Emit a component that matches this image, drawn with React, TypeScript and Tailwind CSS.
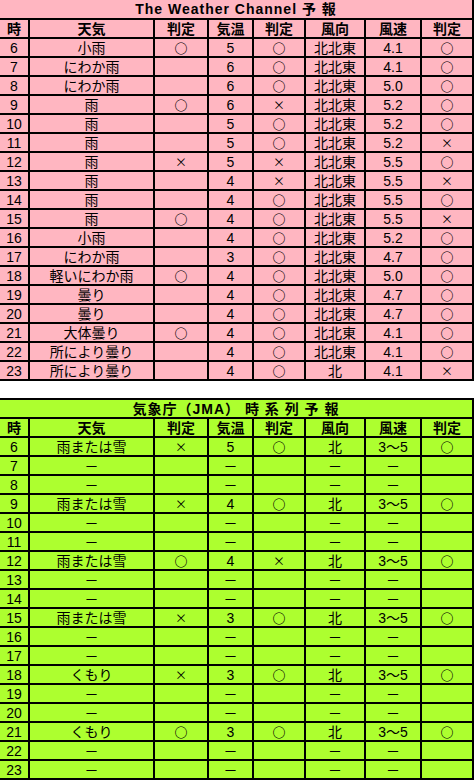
import React from "react"

type Row = string[]

// hour, weather, judge, temp, judge, wind dir, wind speed, judge
const TWC_ROWS: Row[] = [
  ["6", "小雨", "○", "5", "○", "北北東", "4.1", "○"],
  ["7", "にわか雨", "", "6", "○", "北北東", "4.1", "○"],
  ["8", "にわか雨", "", "6", "○", "北北東", "5.0", "○"],
  ["9", "雨", "○", "6", "×", "北北東", "5.2", "○"],
  ["10", "雨", "", "5", "○", "北北東", "5.2", "○"],
  ["11", "雨", "", "5", "○", "北北東", "5.2", "×"],
  ["12", "雨", "×", "5", "×", "北北東", "5.5", "○"],
  ["13", "雨", "", "4", "×", "北北東", "5.5", "×"],
  ["14", "雨", "", "4", "○", "北北東", "5.5", "○"],
  ["15", "雨", "○", "4", "○", "北北東", "5.5", "×"],
  ["16", "小雨", "", "4", "○", "北北東", "5.2", "○"],
  ["17", "にわか雨", "", "3", "○", "北北東", "4.7", "○"],
  ["18", "軽いにわか雨", "○", "4", "○", "北北東", "5.0", "○"],
  ["19", "曇り", "", "4", "○", "北北東", "4.7", "○"],
  ["20", "曇り", "", "4", "○", "北北東", "4.7", "○"],
  ["21", "大体曇り", "○", "4", "○", "北北東", "4.1", "○"],
  ["22", "所により曇り", "", "4", "○", "北北東", "4.1", "○"],
  ["23", "所により曇り", "", "4", "○", "北", "4.1", "×"],
]

const dash = (h: string): Row => [h, "－", "", "－", "", "－", "－", ""]

const JMA_ROWS: Row[] = [
  ["6", "雨または雪", "×", "5", "○", "北", "3～5", "○"],
  dash("7"),
  dash("8"),
  ["9", "雨または雪", "×", "4", "○", "北", "3～5", "○"],
  dash("10"),
  dash("11"),
  ["12", "雨または雪", "○", "4", "×", "北", "3～5", "○"],
  dash("13"),
  dash("14"),
  ["15", "雨または雪", "×", "3", "○", "北", "3～5", "○"],
  dash("16"),
  dash("17"),
  ["18", "くもり", "×", "3", "○", "北", "3～5", "○"],
  dash("19"),
  dash("20"),
  ["21", "くもり", "○", "3", "○", "北", "3～5", "○"],
  dash("22"),
  dash("23"),
]

const HEADERS = ["時", "天気", "判定", "気温", "判定", "風向", "風速", "判定"]

function Cell({ value }: { value: string }) {
  // judgement marks come from the CJK font so they render full size
  if (value === "○") {
    return <span className="font-['Noto_Sans_CJK_JP',sans-serif] font-bold text-[13px]">○</span>
  }
  if (value === "×") {
    return <span className="font-['Noto_Sans_CJK_JP',sans-serif] text-[12px]">×</span>
  }
  return <>{value}</>
}

function ForecastTable({
  title,
  rows,
  cellBg,
  outer,
}: {
  title: string
  rows: Row[]
  cellBg: string
  outer: string
}) {
  return (
    <div
      className={`grid grid-cols-[28px_123px_52px_43px_50px_58px_54px_50px] gap-[2px] bg-black w-[474px] ${outer}`}
    >
      <div className={`col-span-8 h-[17px] ${cellBg} flex items-center justify-center font-bold tracking-[1px] leading-none`}>
        {title}
      </div>
      {HEADERS.map((h, i) => (
        <div key={i} className={`h-[17px] ${cellBg} flex items-center justify-center font-bold leading-none`}>
          {h}
        </div>
      ))}
      {rows.map((r, ri) =>
        r.map((c, ci) => (
          <div key={ri + "-" + ci} className={`h-[17px] ${cellBg} flex items-center justify-center leading-none`}>
            <Cell value={c} />
          </div>
        ))
      )}
    </div>
  )
}

export default function App() {
  return (
    <div
      className="w-[475px] h-[780px] bg-white text-black text-[14px] overflow-hidden"
      style={{ fontFamily: '"Liberation Sans", "Noto Sans CJK JP", sans-serif' }}
    >
      <ForecastTable
        title="The Weather Channel 予 報"
        rows={TWC_ROWS}
        cellBg="bg-[#ffb6c1]"
        outer="pr-[2px] pb-[2px] [&>div:first-child]:h-[18px]"
      />
      <div className="h-[17px]" />
      <ForecastTable title="気象庁（JMA） 時 系 列 予 報" rows={JMA_ROWS} cellBg="bg-[#adff2f]" outer="p-[2px] pl-0" />
    </div>
  )
}
